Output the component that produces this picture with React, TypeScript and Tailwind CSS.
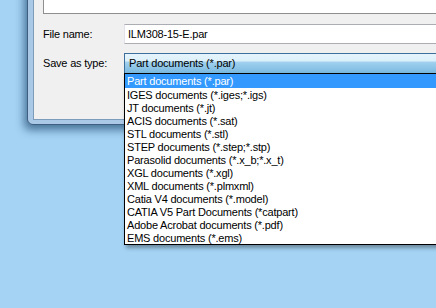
const FONT = { fontFamily: '"Liberation Sans", Arial, sans-serif' };

const fileTypes = [
  'Part documents (*.par)',
  'IGES documents (*.iges;*.igs)',
  'JT documents (*.jt)',
  'ACIS documents (*.sat)',
  'STL documents (*.stl)',
  'STEP documents (*.step;*.stp)',
  'Parasolid documents (*.x_b;*.x_t)',
  'XGL documents (*.xgl)',
  'XML documents (*.plmxml)',
  'Catia V4 documents (*.model)',
  'CATIA V5 Part Documents (*catpart)',
  'Adobe Acrobat documents (*.pdf)',
  'EMS documents (*.ems)',
];

export default function App() {
  const selected = 0;

  return (
    <div
      className="relative w-[436px] h-[308px] overflow-hidden bg-[#a4d3f4] text-[11px] tracking-[-0.2px] text-black"
      style={FONT}
    >
      {/* dialog window */}
      <div className="absolute left-[27px] top-[-30px] w-[460px] h-[155px] rounded-b-[6px] border border-[#3f5f80] bg-[#aac9e7] pl-[5px] pb-[4px] shadow-[-3px_5px_9px_rgba(0,40,80,0.55)]">
        <div className="h-full border-l border-b border-[#7d9bbb] bg-[#f0f0f0] pl-[9px]">
          <div className="h-[43px] border border-t-0 border-[#8e8f8f] bg-white" />

          <div className="mt-[10px] flex items-center">
            <span className="w-[81px]">File name:</span>
            <div className="flex h-[20px] flex-1 items-center border border-[#abadb3] border-l-[#e2e3ea] bg-white pl-[3px]">
              ILM308-15-E.par
            </div>
          </div>

          <div className="mt-[9px] flex items-center">
            <span className="w-[81px]">Save as type:</span>
            <div className="flex h-[21px] flex-1 items-center border border-[#3c6f9c] bg-[linear-gradient(#e6f4fc_0%,#dcf0fb_35%,#9fd0ee_45%,#7ab9e0_100%)] pl-[4px]">
              {fileTypes[selected]}
            </div>
          </div>
        </div>
      </div>

      {/* open dropdown list */}
      <div className="absolute left-[124px] top-[73px] w-[340px] border border-black bg-white shadow-[2px_3px_4px_rgba(0,0,0,0.35)]">
        {fileTypes.map((t, i) => (
          <div
            key={t}
            className={
              i === selected
                ? 'h-[14px] whitespace-nowrap bg-[#3399ff] pl-[2px] leading-[15px] text-white'
                : 'h-[13px] whitespace-nowrap pl-[2px] leading-[15px]'
            }
          >
            {t}
          </div>
        ))}
      </div>
    </div>
  );
}
